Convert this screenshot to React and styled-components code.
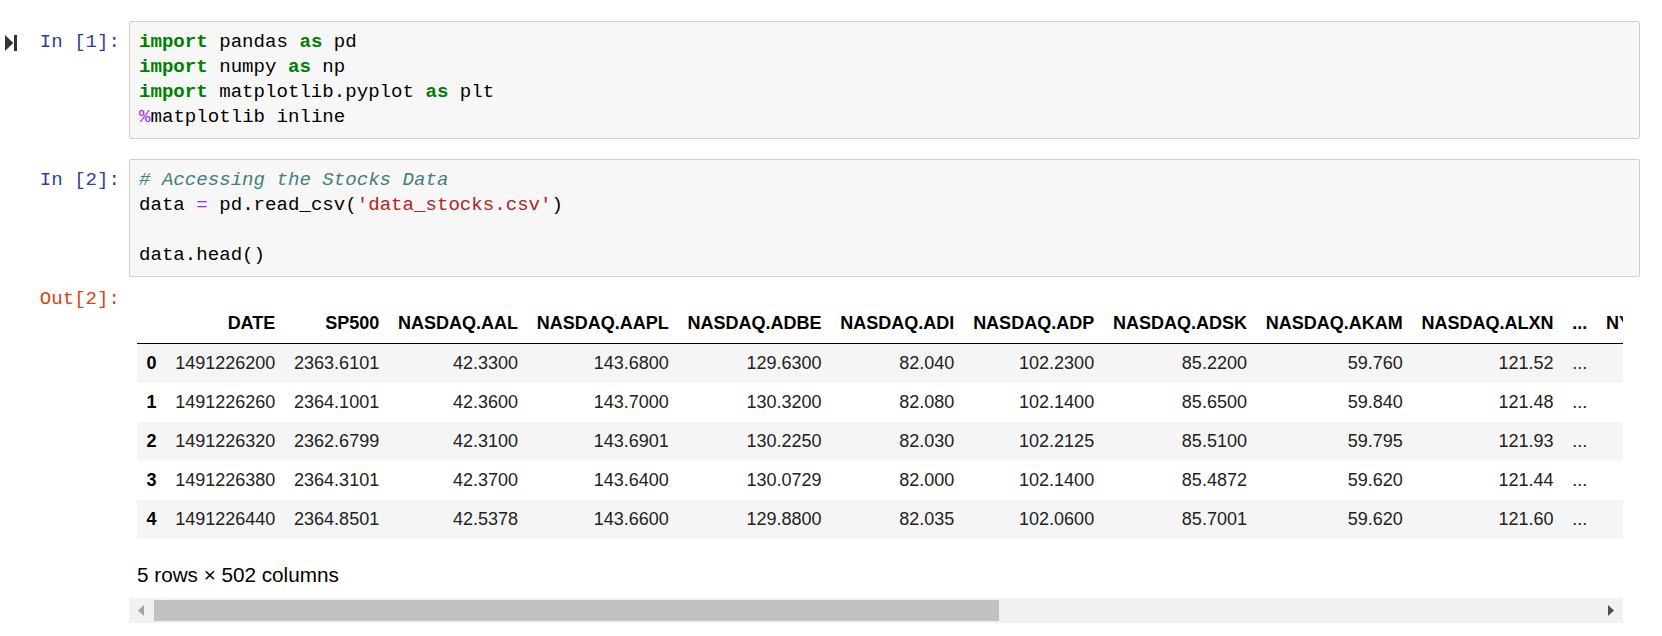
import styled, { createGlobalStyle } from 'styled-components'

const GlobalStyle = createGlobalStyle`
  html, body {
    margin: 0;
    padding: 0;
    background: #ffffff;
  }
  body {
    font-family: "Liberation Sans", Arial, sans-serif;
    color: #000;
  }
`;

const columns = [
    'DATE', 'SP500', 'NASDAQ.AAL', 'NASDAQ.AAPL', 'NASDAQ.ADBE', 'NASDAQ.ADI',
    'NASDAQ.ADP', 'NASDAQ.ADSK', 'NASDAQ.AKAM', 'NASDAQ.ALXN', '...',
    'NYSE.WYN', 'NYSE.XEC',
];

const rows = [
    ['1491226200', '2363.6101', '42.3300', '143.6800', '129.6300', '82.040', '102.2300', '85.2200', '59.760', '121.52', '...', '102.06', '98.33'],
    ['1491226260', '2364.1001', '42.3600', '143.7000', '130.3200', '82.080', '102.1400', '85.6500', '59.840', '121.48', '...', '102.07', '98.36'],
    ['1491226320', '2362.6799', '42.3100', '143.6901', '130.2250', '82.030', '102.2125', '85.5100', '59.795', '121.93', '...', '102.04', '98.30'],
    ['1491226380', '2364.3101', '42.3700', '143.6400', '130.0729', '82.000', '102.1400', '85.4872', '59.620', '121.44', '...', '102.03', '98.35'],
    ['1491226440', '2364.8501', '42.5378', '143.6600', '129.8800', '82.035', '102.0600', '85.7001', '59.620', '121.60', '...', '102.05', '98.30'],
];

function RunIcon() {
    return (
        <svg width="12" height="16" viewBox="0 0 12 16">
            <polygon points="0,0 8.3,8 0,16" fill="#333" />
            <rect x="9" y="0" width="3" height="16" fill="#333" />
        </svg>
    );
}

function Arrow({ dir, color }) {
    return (
        <svg width="7" height="11" viewBox="0 0 7 11">
            {dir === 'left'
                ? <polygon points="6,0 0,5.5 6,11" fill={color} />
                : <polygon points="1,0 7,5.5 1,11" fill={color} />}
        </svg>
    );
}

function App() {
    return (
        <Page>
            <GlobalStyle />
            <Cell>
                <Prompt>
                    <RunSlot><RunIcon /></RunSlot>
                    <PromptText>In&nbsp;[1]:</PromptText>
                </Prompt>
                <InputArea>
                    <CodeLine><Kw>import</Kw> pandas <Kw>as</Kw> pd</CodeLine>
                    <CodeLine><Kw>import</Kw> numpy <Kw>as</Kw> np</CodeLine>
                    <CodeLine><Kw>import</Kw> matplotlib.pyplot <Kw>as</Kw> plt</CodeLine>
                    <CodeLine><Op>%</Op>matplotlib inline</CodeLine>
                </InputArea>
            </Cell>

            <Cell>
                <Prompt>
                    <PromptText>In&nbsp;[2]:</PromptText>
                </Prompt>
                <InputArea>
                    <CodeLine><Cm># Accessing the Stocks Data</Cm></CodeLine>
                    <CodeLine>data <Op>=</Op> pd.read_csv(<Str>'data_stocks.csv'</Str>)</CodeLine>
                    <CodeLine />
                    <CodeLine>data.head()</CodeLine>
                </InputArea>
            </Cell>

            <OutputRow>
                <Prompt>
                    <PromptText out>Out[2]:</PromptText>
                </Prompt>
                <OutputSub>
                    <TableClip>
                        <Table>
                            <thead>
                                <tr>
                                    <Th />
                                    {columns.map((c) => <Th key={c}>{c}</Th>)}
                                </tr>
                            </thead>
                            <tbody>
                                {rows.map((r, i) => (
                                    <tr key={i}>
                                        <Th>{i}</Th>
                                        {r.map((v, j) => <Td key={j}>{v}</Td>)}
                                    </tr>
                                ))}
                            </tbody>
                        </Table>
                        <Summary>5 rows × 502 columns</Summary>
                    </TableClip>
                    <ScrollBar>
                        <ArrowButton><Arrow dir="left" color="#a3a3a3" /></ArrowButton>
                        <Track>
                            <Thumb />
                        </Track>
                        <ArrowButton><Arrow dir="right" color="#505050" /></ArrowButton>
                    </ScrollBar>
                </OutputSub>
            </OutputRow>
        </Page>
    );
}

export default App

const Page = styled.div`
    display: flex;
    flex-direction: column;
    gap: 20px;
    padding: 21px 22px 0 0;
    width: 1662px;
    box-sizing: border-box;
`;

const Cell = styled.div`
    display: flex;
    flex-direction: row;
    align-items: flex-start;
`;

const OutputRow = styled(Cell)`
    margin-top: -19px;
`;

const Prompt = styled.div`
    width: 129px;
    flex: none;
    box-sizing: border-box;
    display: flex;
    align-items: center;
    padding: 9px 9px 0 5px;
`;

const RunSlot = styled.div`
    display: flex;
    align-items: center;
    height: 25px;
`;

const PromptText = styled.div`
    margin-left: auto;
    font-family: "Liberation Mono", "DejaVu Sans Mono", monospace;
    font-size: 19.1px;
    line-height: 25px;
    color: ${(props) => (props.out ? '#D84315' : '#303F9F')};
    white-space: nowrap;
`;

const InputArea = styled.div`
    flex: 1;
    background: #f7f7f7;
    border: 1px solid #cfcfcf;
    border-radius: 2px;
    padding: 8px 9px;
    font-family: "Liberation Mono", "DejaVu Sans Mono", monospace;
    font-size: 19.1px;
    line-height: 25px;
    color: #000;
`;

const CodeLine = styled.div`
    height: 25px;
    white-space: pre;
`;

const Kw = styled.span`
    color: #008000;
    font-weight: bold;
`;

const Op = styled.span`
    color: #AA22FF;
`;

const Cm = styled.span`
    color: #408080;
    font-style: italic;
`;

const Str = styled.span`
    color: #BA2121;
`;

const OutputSub = styled.div`
    width: 1494px;
    flex: none;
    display: flex;
    flex-direction: column;
`;

const TableClip = styled.div`
    overflow: hidden;
    padding: 8px 0 8px 8px;
`;

const Table = styled.table`
    margin-top: 18px;
    border-collapse: collapse;
    border-spacing: 0;
    font-size: 18px;
    color: #000;
    white-space: nowrap;

    thead {
        border-bottom: 1px solid #000;
    }
    tbody tr:nth-child(odd) {
        background: #f5f5f5;
    }
`;

const Th = styled.th`
    text-align: right;
    vertical-align: middle;
    padding: 9px 9.4px;
    font-weight: bold;
    line-height: normal;
`;

const Td = styled.td`
    text-align: right;
    vertical-align: middle;
    padding: 9px 9.4px;
    line-height: normal;
    color: #222;
`;

const Summary = styled.p`
    margin: 21px 0 0 0;
    font-size: 20.7px;
    line-height: 30px;
    color: #000;
`;

const ScrollBar = styled.div`
    display: flex;
    height: 25px;
    background: #f1f1f1;
`;

const ArrowButton = styled.div`
    width: 25px;
    flex: none;
    display: flex;
    align-items: center;
    justify-content: center;
`;

const Track = styled.div`
    flex: 1;
    display: flex;
    align-items: center;
`;

const Thumb = styled.div`
    width: 58.5%;
    height: 21px;
    background: #c1c1c1;
`;
